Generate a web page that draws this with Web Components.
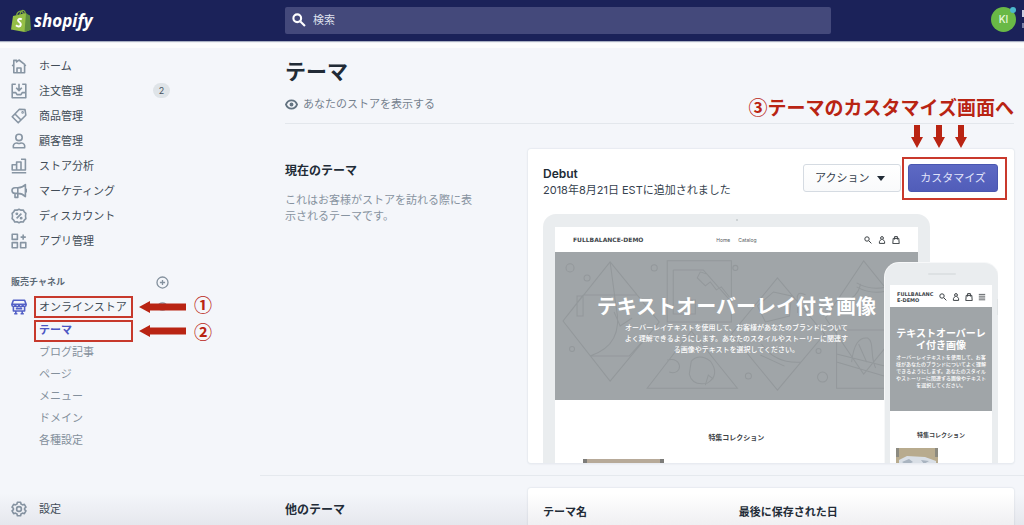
<!DOCTYPE html>
<html lang="ja">
<head>
<meta charset="utf-8">
<meta name="viewport" content="width=device-width, initial-scale=1">
<title>テーマ</title>
<style>
html,body{margin:0;height:100%}
body{font-family:Inter,"Noto Sans CJK JP",sans-serif;font-size:11px;line-height:16px;color:#36424e;background:#f4f6fa;--red:#b92413;--indigo:#5261c4}
</style>
</head>
<body>
<admin-shell>
  <top-bar slot="top"></top-bar>
  <side-nav slot="nav"></side-nav>
  <theme-page></theme-page>
</admin-shell>
<script>
const define=(name,html)=>customElements.define(name,class extends HTMLElement{
  constructor(){super();this.attachShadow({mode:'open'})}
  connectedCallback(){
    if(this.shadowRoot.firstChild)return;
    const t=document.createElement('template');
    t.innerHTML='<style>*{box-sizing:border-box}:host{box-sizing:border-box}</style>'+(typeof html==='function'?html(this):html);
    this.shadowRoot.append(t.content.cloneNode(true));
  }
});

const icons={
 home:'<path d="M3.5 8v10.500h13.500V8L10 2.500 7 5V3H3.500v5L1.500 10M16.500 8l2 2M7.500 18v-5.500h5V18"/>',
 orders:'<path d="M6 1.500H1.500v17h17v-17H14M10 1v8M6.500 6 10 9.500 13.500 6M1.500 12H6l1.500 2.500h5L14 12h4.500"/>',
 tag:'<path d="m1.500 11 9-9.500 7 .5 1 7-9.500 9.500zM5 7.500l7.500 7.500"/><circle cx="14.500" cy="5.500" r=".6"/>',
 person:'<circle cx="10" cy="5.500" r="4"/><path d="M3 18.500c-.8-3.500 1-6 4-6 1.500 0 1.500.7 3 .7s1.500-.7 3-.7c3 0 4.800 2.500 4 6z"/>',
 chart:'<path d="M1.500 8.500H7V15H1.500zM7 5h5.500v10H7zM12.500 1.500h5.500V15h-5.500M1 18.500h18"/>',
 horn:'<path d="M18 2v15c-3-3-6-4-9.500-4H5c-5 0-5-7 0-7h3.500C12 6 15 5 18 2zM8.500 6v7M5 13v5h3.500v-5M18 7.500c2 0 2 4 0 4"/>',
 discount:'<path d="m10 1.500 2.500 1.200 2.800-.2 1.300 2.400 2 1.900-.5 3.200.5 3.200-2 1.900-1.300 2.400-2.800-.2L10 18.500l-2.500-1.200-2.800.2-1.300-2.400-2-1.900.5-3.200-.5-3.200 2-1.900 1.300-2.400 2.800.2zM7 13l6-6"/><circle cx="7.300" cy="7.300" r=".8"/><circle cx="12.700" cy="12.700" r=".8"/>',
 apps:'<path d="M1.500 1.500H8V8H1.500zM1.500 12H8v6.500H1.500zM12 12h6.500v6.500H12zM15.200 2v6.500M12 5.200h6.500"/>',
 shop:'<path d="M3 1.500h14l2 5.500c0 3-4 3-4.500.500C14 10.300 10.500 10.300 10 7.500 9.500 10.300 6 10.300 5.500 7.500 5 10 1 10 1 7zM1 6.500h18M3 9.500V15h14V9.500M6 12h8M6 15v3.500M14 15v3.500M4 18.500h4M12 18.500h4"/>',
 gear:'<path d="m8 1.500-.5 2.300-2 1.100-2.200-.7-2 3.500L3 9.200v1.600l-1.700 1.500 2 3.500 2.200-.7 2 1.100.5 2.300h4l.5-2.300 2-1.100 2.200.7 2-3.500L17 10.800V9.200l1.700-1.500-2-3.500-2.200.7-2-1.100-.5-2.300z"/><circle cx="10" cy="10" r="3"/>',
 plus:'<circle cx="10" cy="10" r="8.500"/><path d="M10 6v8M6 10h8"/>',
 eye:'<path d="M1.500 10C4.500 1.500 15.500 1.500 18.500 10 15.500 18.500 4.500 18.500 1.500 10z" stroke-width="3"/><circle cx="10" cy="10" r="2" fill="currentColor"/>',
 search:'<circle cx="7.500" cy="7.500" r="5.500"/><path d="m12 12 6.500 6.500"/>',
 user:'<circle cx="10" cy="5" r="3.500"/><path d="M7.500 8.500 3.500 14v4.500h13V14l-4-5.500"/>',
 bag:'<path d="M3 6h14l1 13H2zM6.500 9V1.500h7V9"/>',
 menu:'<path d="M2 3.500h16M2 8h16M2 12.500h16M2 17h16"/>'
};
define('ui-icon',el=>`<style>:host{display:block;flex:none;width:16px;height:16px}svg{display:block;width:100%;height:100%}</style>
<svg viewBox="0 0 20 20" fill="none" stroke="currentColor" stroke-width="${el.getAttribute('weight')||2}" stroke-linejoin="round" aria-hidden="true">${icons[el.getAttribute('name')]}</svg>`);

define('admin-shell',`<style>
:host{display:grid;grid-template-columns:260px minmax(0,1fr);grid-template-rows:auto minmax(0,1fr);height:100vh;overflow:hidden;position:relative}
.top{grid-column:1/-1}
main{min-width:0;overflow:hidden}
.fade{position:absolute;left:0;right:0;bottom:0;height:32px;background:linear-gradient(transparent,rgba(60,60,90,.08));pointer-events:none}
</style><div class="top"><slot name="top"></slot></div><slot name="nav"></slot><main><slot></slot></main><div class="fade"></div>`);

define('top-bar',`<style>
:host{display:block;background:linear-gradient(#eef1f4,#fcfdfd 3px);padding-bottom:7px}
header{display:grid;grid-template-columns:285px minmax(0,1fr) 193px;height:41px;align-items:center;background:#1b2259;box-shadow:0 1px 1px #a9b0c2;position:relative}
header::after{content:"";position:absolute;right:0;top:10px;width:2px;height:18px;background:linear-gradient(#c9cce0 7px,transparent 7px 13px,#7c81a8 13px)}
.logo{display:flex;align-items:center;gap:3px;margin-left:11px;color:#fff;text-decoration:none;font:italic 700 17px/24px "Open Sans",sans-serif}
.logo svg{width:20px;height:24px}
form{display:flex;align-items:center;gap:7px;height:27px;padding:0 7px;margin:0 0 1px;background:#44497b;border-radius:2px;color:#fff}
ui-icon{width:14px;height:14px}
input{flex:1;min-width:0;border:0;padding:0;background:none;color:#fff;font:inherit;outline:0}
input::placeholder{color:#dfe1ee;opacity:1}
.account{position:relative;justify-self:end;margin-right:8px;width:25px;height:25px;margin-bottom:2px;border:0;border-radius:50%;padding:0;background:#69b946;color:#e9f8df;font:500 10px/25px Inter,sans-serif}
.account i{position:absolute;right:0;top:0;width:6px;height:6px;border-radius:50%;background:#4cb9cd}
</style><header>
<a class="logo" href="#"><svg viewBox="0 0 20 24"><path d="M2 7 15 4l3 17.500L13.500 23 0 20.500z" fill="#95bf47"/><path d="m15 4 2 1.500 2 1 1 14.500-6.500 2z" fill="#5e8e3e"/><path d="M5.500 7C6 2 11 0 12.500 5M9 6c0-3 2-5 3.500-4.500C14 2 14.500 4 14 5" fill="none" stroke="#7ea83f" stroke-width="1.300"/><path d="M10.800 10.300c-2.600-1.300-4 .1-3.700 1.300.3 1.500 3 1.500 2.700 4-.3 2.300-3 2.400-4.800.7" fill="none" stroke="#fff" stroke-width="2"/></svg><span>shopify</span></a>
<form role="search"><ui-icon name="search" weight="3"></ui-icon><input type="search" aria-label="検索" placeholder="検索"></form>
<button class="account">KI<i></i></button>
</header>`);

define('nav-item',el=>`<style>
:host{display:block;position:relative;color:#8795a3}
a{display:flex;align-items:center;gap:12px;height:${el.hasAttribute('sub')?22:25}px;padding-left:${el.hasAttribute('sub')?39:11}px;color:inherit;text-decoration:none}
.t{flex:1;color:${el.hasAttribute('active')?'#4c57c4':el.hasAttribute('sub')?'#84909c':'#414c57'};font-weight:${el.hasAttribute('active')?'600':'400'}}
:host([on]) ui-icon{color:#5360c6}
</style><a href="#">${el.getAttribute('icon')?`<ui-icon name="${el.getAttribute('icon')}"></ui-icon>`:''}<span class="t"><slot></slot></span><slot name="end"></slot></a><slot name="note"></slot>`);

define('step-note',el=>`<style>
:host{position:absolute;left:34px;top:${el.getAttribute('top')||0}px;display:flex;align-items:center;gap:6px;height:22px;color:var(--red);white-space:nowrap;pointer-events:none}
.box{width:99px;height:22px;border:2px solid #c7392c}
svg{width:47px;height:12px}
b{font:700 18px/22px "Noto Sans CJK JP",sans-serif;margin-left:2px}
:host([raised]) b{margin-bottom:6px}
</style><span class="box"></span><svg viewBox="0 0 47 12"><path d="M0 6 11 0v2.500h36v7H11V12z" fill="currentColor"/></svg><b><slot></slot></b>`);

define('side-nav',`<style>
:host{display:block;min-height:0}
nav{display:flex;flex-direction:column;height:100%;width:170px;padding:5px 0 4px}
.badge{width:17px;border-radius:8px;background:#dfe4e8;color:#45515c;font-size:9px;line-height:15px;text-align:center}
.head{display:flex;align-items:center;justify-content:space-between;height:18px;margin:20px 1px 3px 11px}
h2{margin:0;font-size:9px;line-height:18px;font-weight:600;color:#5c6975}
button{border:0;padding:0;background:none;color:#84919e}
.head ui-icon{width:13px;height:13px}
.view{width:11px;height:11px;margin-right:2px;color:#8b98a7}
.last{margin-top:auto}
</style><nav>
<nav-item icon="home">ホーム</nav-item>
<nav-item icon="orders">注文管理<span class="badge" slot="end">2</span></nav-item>
<nav-item icon="tag">商品管理</nav-item>
<nav-item icon="person">顧客管理</nav-item>
<nav-item icon="chart">ストア分析</nav-item>
<nav-item icon="horn">マーケティング</nav-item>
<nav-item icon="discount">ディスカウント</nav-item>
<nav-item icon="apps">アプリ管理</nav-item>
<div class="head"><h2>販売チャネル</h2><button aria-label="追加"><ui-icon name="plus"></ui-icon></button></div>
<nav-item icon="shop" on>オンラインストア<ui-icon class="view" name="eye" slot="end"></ui-icon><step-note slot="note" top="2" raised>①</step-note></nav-item>
<nav-item sub active>テーマ<step-note slot="note" top="1">②</step-note></nav-item>
<nav-item sub>ブログ記事</nav-item>
<nav-item sub>ページ</nav-item>
<nav-item sub>メニュー</nav-item>
<nav-item sub>ドメイン</nav-item>
<nav-item sub>各種設定</nav-item>
<nav-item class="last" icon="gear">設定</nav-item>
</nav>`);

define('page-note',`<style>
:host{position:absolute;right:0;top:46px;color:var(--red);white-space:nowrap;pointer-events:none}
p{margin:0;font:700 19px/26px "Noto Sans CJK JP",sans-serif}
div{display:flex;gap:10px;justify-content:flex-end;margin:5px 47px 0 0}
svg{width:12px;height:23px}
</style><p>③<slot></slot></p><div>${'<svg viewBox="0 0 12 23"><path d="M3 0h6v12h3L6 23 0 12h3z" fill="currentColor"/></svg>'.repeat(3)}</div>`);

define('annotated-section',el=>`<style>
:host{display:block;padding:${el.hasAttribute('ruled')?'12px':'25px'} 10px 12px 25px;${el.hasAttribute('ruled')?'border-top:1px solid #e5e9ee':''}}
.grid{display:grid;grid-template-columns:minmax(0,1fr) minmax(0,2fr)}
.info{padding:13px 52px 0 0}
::slotted(h2){margin:0 0 12px;font-size:12px;line-height:18px;font-weight:700;color:#212b36}
::slotted(p){margin:0;color:#8793a0}
</style><div class="grid"><div class="info"><slot name="info"></slot></div><div><slot></slot></div></div>`);

define('ui-card',`<style>:host{display:block;padding:15px 16px 0 15px;background:#fff;border-radius:3px;box-shadow:0 0 1px 1px #e8ecf1,0 1px 2px #dfe4ea}</style><slot></slot>`);

define('shop-icons',el=>`<style>
:host{display:flex;gap:${el.getAttribute('gap')}px;color:#3d4246}ui-icon{width:8px;height:8px}
</style><ui-icon name="search" weight="2.500"></ui-icon><ui-icon name="user" weight="2.500"></ui-icon><ui-icon name="bag" weight="2.500"></ui-icon>${el.hasAttribute('menu')?'<ui-icon name="menu" weight="2"></ui-icon>':''}`);

define('hero-art',`<style>:host{position:absolute;inset:0}svg{width:100%;height:100%;display:block}</style>
<svg viewBox="0 0 362 148" preserveAspectRatio="xMidYMid slice" fill="none" stroke="#93989b" stroke-width="1">
<path d="M55 10 104 70 55 129 8 69zM28 43h54l22 27M28 43 8 69M35 104h39l18-20M55 10l6 45q8 38-26 49M22 44h6v20h-6zM59 60l6 14 12-8"/>
<path d="M112 9h64v61h-64zM118 18h30l28 32M118 18v44h22V48h-9M145 20l-3 6 8 8 5-4 6 8 5-3 8 10M145 20l6 2"/>
<path d="M136 79 92 136h90zM112 108c16-4 16 16 2 12M136 109q8-8 19 0 10 14-3 22-15 3-18-9zM150 133l3-10 5 4"/>
<path d="M222 26 269 82 222 138 176 82zM202 54l16-14 18 4-2 20-24 6zM206 92q14 20 40 18M205 103l24 11M250 43q-10-6-8 8v10"/>
<path d="M308 9 354 66 308 122 270 66zM301 31q14 8 30 4M301 35q14 8 30 4M288 50q14-4 17-18M281 78h81M281 78v58h81V78M281 110l82 24M281 102l80 20M296 110q3-26 16-24c7 4 2 18 8 30M303 92l8 18"/>
<circle cx="15" cy="16" r="4"/><circle cx="32" cy="26" r="3"/><circle cx="17" cy="97" r="2.500"/><circle cx="99" cy="16" r="3"/><circle cx="180" cy="16" r="2.500"/><circle cx="193" cy="124" r="3"/><circle cx="267" cy="125" r="5"/><circle cx="263" cy="99" r="2.500"/>
</svg>`);

define('laptop-preview',`<style>
:host{display:block;width:85%;height:100%;padding:13px 12px 0;background:#eaedef;border-radius:13px 13px 0 0;position:relative;text-align:center}
:host::before{content:"";position:absolute;left:50%;top:5px;width:2px;height:2px;border-radius:50%;background:#c5cacd}
.screen{height:100%;background:#fff;overflow:hidden}
.bar{display:grid;grid-template-columns:1fr auto 1fr;align-items:center;height:25px;padding:0 18px}
.brand{justify-self:start;font:700 6px/8px "DejaVu Sans",sans-serif;color:#41464b}
.links{display:flex;gap:8px;font-size:5px;line-height:8px}
.links a{color:#555b60;text-decoration:none}
shop-icons{justify-self:end}
.hero{position:relative;height:148px;padding-top:41px;background:#a0a5a8;color:#fff}
.text{position:relative}
h3{margin:0;font-size:20px;line-height:28px;font-weight:700;white-space:nowrap}
p{margin:1px auto 0;font-size:7px;line-height:11px;width:226px;font-weight:500}
h4{margin:33px 0 16px;font-size:7px;line-height:10px;font-weight:600;color:#3d4246}
.photo{width:81px;height:40px;margin-left:28px;background:#b7aa99;border:solid #7d7c79;border-width:0 4px}
</style><div class="screen"><div class="bar"><span class="brand">FULLBALANCE-DEMO</span><span class="links"><a href="#">Home</a><a href="#">Catalog</a></span><shop-icons gap="6"></shop-icons></div>
<div class="hero"><hero-art></hero-art><div class="text"><h3>テキストオーバーレイ付き画像</h3><p>オーバーレイテキストを使用して、お客様があなたのブランドについてよく理解できるようにします。あなたのスタイルやストーリーに関連する画像やテキストを選択してください。</p></div></div>
<h4>特集コレクション</h4><div class="photo"></div></div>`);

define('phone-preview',`<style>
:host{position:absolute;right:0;top:49px;width:113px;height:100%;padding:22px 6px 0 5px;background:#eaedef;border-radius:14px 14px 0 0;box-shadow:0 0 0 1px #f7f8f9;text-align:center}
:host::before{content:"";position:absolute;left:43px;top:10px;width:28px;height:2px;border-radius:1px;background:#dde1e3}
:host::after{content:"";position:absolute;right:-1px;top:36px;width:2px;height:16px;background:#dfe3e5}
.screen{height:100%;background:#fff}
.bar{display:flex;align-items:center;justify-content:space-between;height:22px;padding:2px 6px 0 7px}
.brand{font:700 5px/6px "DejaVu Sans",sans-serif;color:#41464b;text-align:left}
.hero{height:104px;padding:20px 5px 0;background:#a0a5a8;color:#fff}
h3{margin:0;font-size:10px;line-height:12px;font-weight:700}
p{margin:3px auto 0;width:91px;font-size:5px;line-height:7px;font-weight:500}
h4{margin:19px 0 8px;font-size:6px;line-height:10px;font-weight:600;color:#3d4246}
.photo{display:block;width:42px;height:30px;margin-left:6px}
</style><div class="screen"><div class="bar"><span class="brand">FULLBALANC<br>E-DEMO</span><shop-icons gap="5" menu></shop-icons></div>
<div class="hero"><h3>テキストオーバーレイ付き画像</h3><p>オーバーレイテキストを使用して、お客様があなたのブランドについてよく理解できるようにします。あなたのスタイルやストーリーに関連する画像やテキストを選択してください。</p></div>
<h4>特集コレクション</h4><svg class="photo" viewBox="0 0 42 30"><path fill="#b8ab8e" d="M0 0h42v30H0z"/><path fill="#8c8a80" d="M0 0h3v9H0zM39 0h3v9h-3z"/><path fill="#d9dfe6" d="m3 12 8-4 18 1 11 4v17H3z"/><path fill="#a9b4c0" d="m6 14 7-3 4 3-6 3zM25 12l8 1-5 3z"/></svg></div>`);

define('theme-page',`<style>
:host{display:block;position:relative}
.head{position:relative;margin:0 10px 0 25px;padding:10px 0 11px;border-bottom:1px solid #e3e7ec}
h1{margin:0 0 10px;font-size:21px;line-height:28px;font-weight:700;color:#212b36}
.view{display:flex;align-items:center;gap:5px;color:#74818e;text-decoration:none}
.view ui-icon{width:13px;height:13px;color:#637381}
.row{display:flex;gap:7px;align-items:flex-start;height:34px}
.name{flex:1;padding-top:2px;min-width:0}
h3{margin:0;font-size:12px;line-height:16px;font-weight:600;color:#212b36}
.name p{margin:0}
button{height:28px;border-radius:3px;font:inherit;padding:0 11px}
.more{display:flex;align-items:center;gap:8px;width:98px;border:1px solid #d5dbe2;background:linear-gradient(#fff,#f9fafb);color:#36424e}
.more::after{content:"";border:4px solid transparent;border-top:5px solid #212b36;border-bottom:0}
.cta{position:relative}
.cta::after{content:"";position:absolute;inset:-7px -9px -8px -6px;border:2px solid #c9392c;pointer-events:none}
.primary{display:block;width:90px;border:1px solid #4a57b0;background:linear-gradient(#5d69c4,#515db9);color:#e2e5fa}
.preview{position:relative;height:249px;margin-top:16px;overflow:hidden}
table{width:100%;border-collapse:collapse;table-layout:fixed}
th{padding:1px 0 20px;text-align:left;font-weight:700;color:#212b36}
th:first-child{width:43%}
</style>
<div class="head"><h1>テーマ</h1><a class="view" href="#"><ui-icon name="eye"></ui-icon>あなたのストアを表示する</a><page-note>テーマのカスタマイズ画面へ</page-note></div>
<annotated-section><h2 slot="info">現在のテーマ</h2><p slot="info">これはお客様がストアを訪れる際に表示されるテーマです。</p>
<ui-card><div class="row"><div class="name"><h3>Debut</h3><p>2018年8月21日 ESTに追加されました</p></div><button class="more">アクション</button><div class="cta"><button class="primary">カスタマイズ</button></div></div>
<div class="preview"><laptop-preview></laptop-preview><phone-preview></phone-preview></div></ui-card></annotated-section>
<annotated-section ruled><h2 slot="info">他のテーマ</h2><ui-card><table><thead><tr><th scope="col">テーマ名</th><th scope="col">最後に保存された日</th></tr></thead></table></ui-card></annotated-section>`);
</script>
</body>
</html>
